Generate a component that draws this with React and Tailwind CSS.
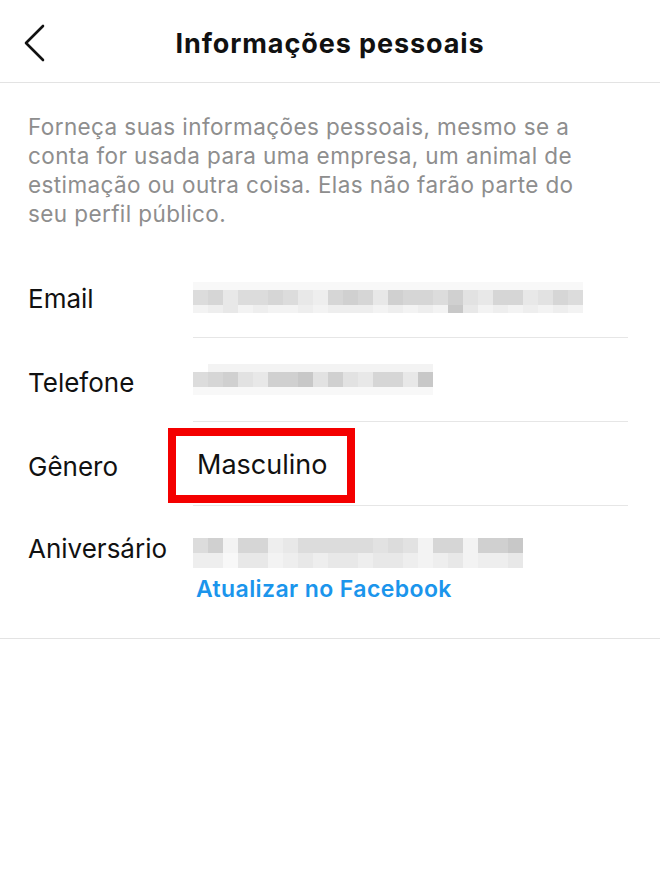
import { ChevronLeft } from "lucide-react"

const shade = {
  a: "bg-[#c8c8c8]",
  b: "bg-[#d0d0d0]",
  c: "bg-[#d6d6d6]",
  d: "bg-[#dcdcdc]",
  e: "bg-[#e2e2e2]",
  f: "bg-[#e8e8e8]",
  g: "bg-[#eeeeee]",
  h: "bg-[#f3f3f3]",
  i: "bg-[#f8f8f8]",
  w: "bg-white",
}

// pixelated (blurred) values
const emailRows = [
  "iiiiiiiiiiiiiiiiiiiiiiiiii",
  "dcfddcdfgcbcfbccdbefccfecd",
  "hgfhghhghggghghghafhghghgh",
]
const phoneRows = [
  "whhhhhhhhhhhhhhh",
  "dcbefbbaebefccfa",
  "iiiiiiiiiiiiiiii",
]
const bdayRows = [
  "dbhccgfdddddedehcchbbaw",
  "ggiffhgfgffgffghgfhggfw",
]

function Pixels({ rows, thinEdges }) {
  return (
    <div className="flex flex-col">
      {rows.map((row, i) => {
        const thin = thinEdges && (i === 0 || i === rows.length - 1)
        return (
          <div key={i} className="flex">
            {row.split("").map((k, j) => (
              <div key={j} className={`w-[15px] ${thin ? "h-[8px]" : "h-[15px]"} ${shade[k]}`} />
            ))}
          </div>
        )
      })}
    </div>
  )
}

function Row({ label, children, last }) {
  return (
    <div className="flex h-[84px]">
      <div className="w-[193px] pl-[28px] pt-[4px] flex items-center text-[26px] text-[#111]">
        {label}
      </div>
      <div className={`flex-1 mr-[32px] flex items-center ${last ? "" : "border-b border-[#e6e6e6]"}`}>
        {children}
      </div>
    </div>
  )
}

export default function App() {
  return (
    <div className="w-[660px] min-h-[880px] bg-white font-['Inter',sans-serif] text-[#111]">
      <div className="h-[83px] border-b border-[#e3e3e3] grid grid-cols-[80px_1fr_80px] items-center">
        <div className="pl-[16px] pt-[2px]">
          <svg width="36" height="40" viewBox="0 0 36 40" fill="none">
            <polyline points="27,4 10,21 27,38" stroke="#111" strokeWidth="2.6" strokeLinecap="round" strokeLinejoin="round" />
          </svg>
        </div>
        <h1 className="text-center text-[27px] font-bold pt-[6px] tracking-[0.9px]">Informações pessoais</h1>
        <div />
      </div>

      <p className="pl-[28px] pr-[70px] pt-[29px] text-[22.5px] leading-[29px] tracking-[0.4px] text-[#8e8e8e]">
        Forneça suas informações pessoais, mesmo se a conta for usada para uma empresa, um animal de estimação ou outra coisa. Elas não farão parte do seu perfil público.
      </p>

      <div className="mt-[26px]">
        <Row label="Email">
          <div className="pt-[4px]">
            <Pixels rows={emailRows} thinEdges />
          </div>
        </Row>
        <Row label="Telefone">
          <Pixels rows={phoneRows} thinEdges />
        </Row>
        <div className="relative">
          <Row label="Gênero">
            <span className="pl-[4px] pt-[4px] text-[27px]">Masculino</span>
          </Row>
          <div className="absolute left-[168px] top-[6px] w-[187px] h-[75px] border-[8px] border-[#f40000]" />
        </div>
        <div className="flex border-b border-[#e3e3e3] pb-[34px]">
          <div className="w-[193px] pl-[28px] pt-[28px] text-[26px] leading-[30px]">Aniversário</div>
          <div className="flex-1 pt-[32px] flex flex-col">
            <Pixels rows={bdayRows} />
            <span className="mt-[6px] text-[23px] leading-[30px] font-semibold tracking-[0.4px] text-[#1b95ec] pl-[3px]">
              Atualizar no Facebook
            </span>
          </div>
        </div>
      </div>
    </div>
  )
}
